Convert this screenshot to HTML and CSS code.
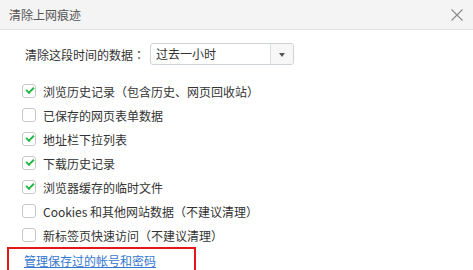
FILE: index.html
```html
<!DOCTYPE html>
<html lang="zh-CN">

<head>
    <meta charset="UTF-8">
    <title>清除上网痕迹</title>
    <link rel="stylesheet" href="styles.css">
</head>

<body>
    <div class="dialog">
        <div class="header">
            <span class="title">清除上网痕迹</span>
            <a href="javascript:;" class="close">
                <svg width="12" height="12" viewBox="0 0 12 12">
                    <path d="M0.5 0.5 L11.5 11.5 M11.5 0.5 L0.5 11.5" stroke="#8a8a8a" stroke-width="1.1" fill="none" />
                </svg>
            </a>
        </div>
        <div class="content">
            <div class="range">
                <span class="label">清除这段时间的数据<span class="punct" lang="ja">：</span></span>
                <div class="select">
                    <span class="value">过去一小时</span>
                    <span class="arrow"></span>
                </div>
            </div>
            <ul class="checklist">
                <li><span class="box on"></span>浏览历史记录<span class="punct" lang="ja">（</span>包含历史、网页回收站<span class="punct" lang="ja">）</span></li>
                <li><span class="box"></span>已保存的网页表单数据</li>
                <li><span class="box on"></span>地址栏下拉列表</li>
                <li><span class="box on"></span>下载历史记录</li>
                <li><span class="box on"></span>浏览器缓存的临时文件</li>
                <li><span class="box"></span>Cookies 和其他网站数据<span class="punct" lang="ja">（</span>不建议清理<span class="punct" lang="ja">）</span></li>
                <li><span class="box"></span>新标签页快速访问<span class="punct" lang="ja">（</span>不建议清理<span class="punct" lang="ja">）</span></li>
            </ul>
            <div class="manage">
                <a href="javascript:;">管理保存过的帐号和密码</a>
            </div>
        </div>
    </div>
</body>

</html>
```

FILE: styles.css
```css
* {
    margin: 0;
    padding: 0;
}

body {
    font-family: "Microsoft YaHei", "Noto Sans CJK SC", sans-serif;
    font-size: 12px;
    color: #333;
    background-color: #fff;
}

/* full-width punctuation sits centred in the original font */
.punct {
    font-family: "Noto Sans CJK JP", sans-serif;
}

.header {
    display: flex;
    align-items: center;
    justify-content: space-between;
    height: 29px;
    padding: 0 10px 0 9px;
    background-color: #f4f4f4;
    border-bottom: 1px solid #e1e1e1;
}

.header .title {
    color: #555;
}

.header .close {
    display: block;
    width: 12px;
    height: 12px;
    margin-top: 1px;
}

.header .close svg {
    display: block;
}

.content {
    padding: 13px 0 0 22px;
}

.range {
    display: flex;
    align-items: center;
    padding-left: 3px;
}

.range .label {
    width: 125px;
}

.select {
    display: flex;
    width: 142px;
    height: 20px;
    border: 1px solid #cfd4d9;
    border-radius: 3px;
}

.select .value {
    flex: 1;
    padding-left: 5px;
    line-height: 20px;
    border-right: 1px solid #d8dde2;
}

.select .arrow {
    position: relative;
    width: 22px;
    background-color: #f7f7f7;
    border-radius: 0 3px 3px 0;
}

.select .arrow::after {
    content: "";
    position: absolute;
    left: 8px;
    top: 9px;
    border-left: 3px solid transparent;
    border-right: 3px solid transparent;
    border-top: 4px solid #555;
}

.checklist {
    margin-top: 14px;
    list-style: none;
}

.checklist li {
    display: flex;
    align-items: center;
    height: 24px;
}

.checklist .box {
    position: relative;
    width: 12px;
    height: 12px;
    margin-right: 7px;
    border: 1px solid #c8c8c8;
    border-radius: 3px;
    background-color: #fff;
}

.checklist .box.on::after {
    content: "";
    position: absolute;
    left: 3px;
    top: 2px;
    width: 6px;
    height: 3px;
    border-left: 2px solid #25b74a;
    border-bottom: 2px solid #25b74a;
    transform: rotate(-45deg);
}

.manage {
    width: 170px;
    height: 30px;
    margin: 0 0 0 -15px;
    padding: 3px 0 0 15px;
    border: 2px solid #e8141b;
    border-bottom: none;
}

.manage a {
    color: #3476d2;
    text-decoration: underline;
}
```
